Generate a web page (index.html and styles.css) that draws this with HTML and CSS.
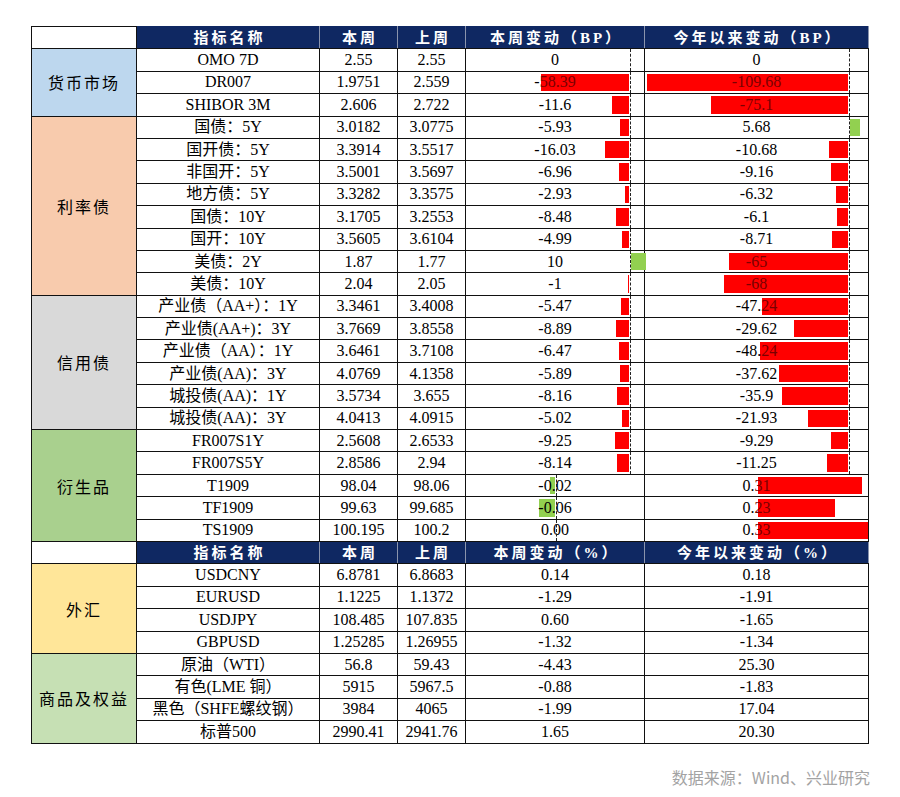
FILE: index.html
```html
<!DOCTYPE html>
<html lang="zh-CN">
<head>
<meta charset="utf-8">
<title>市场数据周报</title>
<link rel="stylesheet" href="styles.css">
</head>
<body>
<div class="page">
<table class="grid">
<colgroup>
<col class="w1"><col class="w2"><col class="w3"><col class="w4"><col class="w5"><col class="w6">
</colgroup>
<tbody>
<tr class="head"><td class="blank"></td><th>指标名称</th><th>本周</th><th>上周</th><th>本周变动（BP）</th><th>今年以来变动（BP）</th></tr>

<tr><td class="cat money" rowspan="3">货币市场</td><td>OMO 7D</td><td>2.55</td><td>2.55</td>
<td class="bc c5"><span class="axis"></span><span class="val">0</span></td>
<td class="bc c6"><span class="axis"></span><span class="val">0</span></td></tr>
<tr><td>DR007</td><td>1.9751</td><td>2.559</td>
<td class="bc c5"><span class="axis"></span><span class="bar neg" style="width:87.6px"></span><span class="val">-<em>58.39</em></span></td>
<td class="bc c6"><span class="axis"></span><span class="bar neg" style="width:200.7px"></span><span class="val"><em>-109.68</em></span></td></tr>
<tr><td>SHIBOR 3M</td><td>2.606</td><td>2.722</td>
<td class="bc c5"><span class="axis"></span><span class="bar neg" style="width:17.4px"></span><span class="val">-11.6</span></td>
<td class="bc c6"><span class="axis"></span><span class="bar neg" style="width:137.4px"></span><span class="val"><em>-75.1</em></span></td></tr>

<tr><td class="cat rate" rowspan="8">利率债</td><td>国债：5Y</td><td>3.0182</td><td>3.0775</td>
<td class="bc c5"><span class="axis"></span><span class="bar neg" style="width:8.9px"></span><span class="val">-5.93</span></td>
<td class="bc c6"><span class="axis"></span><span class="bar pos green" style="width:10.4px"></span><span class="val">5.68</span></td></tr>
<tr><td>国开债：5Y</td><td>3.3914</td><td>3.5517</td>
<td class="bc c5"><span class="axis"></span><span class="bar neg" style="width:24px"></span><span class="val">-16.03</span></td>
<td class="bc c6"><span class="axis"></span><span class="bar neg" style="width:19.5px"></span><span class="val">-10.68</span></td></tr>
<tr><td>非国开：5Y</td><td>3.5001</td><td>3.5697</td>
<td class="bc c5"><span class="axis"></span><span class="bar neg" style="width:10.4px"></span><span class="val">-6.96</span></td>
<td class="bc c6"><span class="axis"></span><span class="bar neg" style="width:16.8px"></span><span class="val">-9.16</span></td></tr>
<tr><td>地方债：5Y</td><td>3.3282</td><td>3.3575</td>
<td class="bc c5"><span class="axis"></span><span class="bar neg" style="width:4.4px"></span><span class="val">-2.93</span></td>
<td class="bc c6"><span class="axis"></span><span class="bar neg" style="width:11.6px"></span><span class="val">-6.32</span></td></tr>
<tr><td>国债：10Y</td><td>3.1705</td><td>3.2553</td>
<td class="bc c5"><span class="axis"></span><span class="bar neg" style="width:12.7px"></span><span class="val">-8.48</span></td>
<td class="bc c6"><span class="axis"></span><span class="bar neg" style="width:11.2px"></span><span class="val">-6.1</span></td></tr>
<tr><td>国开：10Y</td><td>3.5605</td><td>3.6104</td>
<td class="bc c5"><span class="axis"></span><span class="bar neg" style="width:7.5px"></span><span class="val">-4.99</span></td>
<td class="bc c6"><span class="axis"></span><span class="bar neg" style="width:15.9px"></span><span class="val">-8.71</span></td></tr>
<tr><td>美债：2Y</td><td>1.87</td><td>1.77</td>
<td class="bc c5"><span class="axis"></span><span class="bar pos green" style="width:15px"></span><span class="val">10</span></td>
<td class="bc c6"><span class="axis"></span><span class="bar neg" style="width:119px"></span><span class="val"><em>-65</em></span></td></tr>
<tr><td>美债：10Y</td><td>2.04</td><td>2.05</td>
<td class="bc c5"><span class="axis"></span><span class="bar neg" style="width:1.5px"></span><span class="val">-1</span></td>
<td class="bc c6"><span class="axis"></span><span class="bar neg" style="width:124.4px"></span><span class="val"><em>-68</em></span></td></tr>

<tr><td class="cat credit" rowspan="6">信用债</td><td>产业债（AA+）：1Y</td><td>3.3461</td><td>3.4008</td>
<td class="bc c5"><span class="axis"></span><span class="bar neg" style="width:8.2px"></span><span class="val">-5.47</span></td>
<td class="bc c6"><span class="axis"></span><span class="bar neg" style="width:86.4px"></span><span class="val">-47.<em>24</em></span></td></tr>
<tr><td>产业债(AA+)：3Y</td><td>3.7669</td><td>3.8558</td>
<td class="bc c5"><span class="axis"></span><span class="bar neg" style="width:13.3px"></span><span class="val">-8.89</span></td>
<td class="bc c6"><span class="axis"></span><span class="bar neg" style="width:54.2px"></span><span class="val">-29.62</span></td></tr>
<tr><td>产业债（AA）：1Y</td><td>3.6461</td><td>3.7108</td>
<td class="bc c5"><span class="axis"></span><span class="bar neg" style="width:9.7px"></span><span class="val">-6.47</span></td>
<td class="bc c6"><span class="axis"></span><span class="bar neg" style="width:88.3px"></span><span class="val">-48.<em>24</em></span></td></tr>
<tr><td>产业债(AA)：3Y</td><td>4.0769</td><td>4.1358</td>
<td class="bc c5"><span class="axis"></span><span class="bar neg" style="width:8.8px"></span><span class="val">-5.89</span></td>
<td class="bc c6"><span class="axis"></span><span class="bar neg" style="width:68.8px"></span><span class="val">-37.62</span></td></tr>
<tr><td>城投债(AA)：1Y</td><td>3.5734</td><td>3.655</td>
<td class="bc c5"><span class="axis"></span><span class="bar neg" style="width:12.2px"></span><span class="val">-8.16</span></td>
<td class="bc c6"><span class="axis"></span><span class="bar neg" style="width:65.7px"></span><span class="val">-35.9</span></td></tr>
<tr><td>城投债(AA)：3Y</td><td>4.0413</td><td>4.0915</td>
<td class="bc c5"><span class="axis"></span><span class="bar neg" style="width:7.5px"></span><span class="val">-5.02</span></td>
<td class="bc c6"><span class="axis"></span><span class="bar neg" style="width:40.1px"></span><span class="val">-21.93</span></td></tr>

<tr><td class="cat deriv" rowspan="5">衍生品</td><td>FR007S1Y</td><td>2.5608</td><td>2.6533</td>
<td class="bc c5"><span class="axis"></span><span class="bar neg" style="width:13.9px"></span><span class="val">-9.25</span></td>
<td class="bc c6"><span class="axis"></span><span class="bar neg" style="width:17px"></span><span class="val">-9.29</span></td></tr>
<tr><td>FR007S5Y</td><td>2.8586</td><td>2.94</td>
<td class="bc c5"><span class="axis"></span><span class="bar neg" style="width:12.2px"></span><span class="val">-8.14</span></td>
<td class="bc c6"><span class="axis"></span><span class="bar neg" style="width:20.6px"></span><span class="val">-11.25</span></td></tr>
<tr><td>T1909</td><td>98.04</td><td>98.06</td>
<td class="bc c5b"><span class="axis"></span><span class="bar neg green" style="width:5.3px"></span><span class="val">-0.02</span></td>
<td class="bc c6b"><span class="bar pos" style="width:104px"></span><span class="val">0.<em>31</em></span></td></tr>
<tr><td>TF1909</td><td>99.63</td><td>99.685</td>
<td class="bc c5b"><span class="axis"></span><span class="bar neg green" style="width:16px"></span><span class="val">-0.06</span></td>
<td class="bc c6b"><span class="bar pos" style="width:77px"></span><span class="val">0.<em>23</em></span></td></tr>
<tr><td>TS1909</td><td>100.195</td><td>100.2</td>
<td class="bc c5b"><span class="axis"></span><span class="val">0.00</span></td>
<td class="bc c6b"><span class="bar pos" style="width:110px"></span><span class="val">0.<em>33</em></span></td></tr>

<tr class="head"><td class="blank"></td><th>指标名称</th><th>本周</th><th>上周</th><th>本周变动（%）</th><th>今年以来变动（%）</th></tr>

<tr><td class="cat fx" rowspan="4">外汇</td><td>USDCNY</td><td>6.8781</td><td>6.8683</td><td>0.14</td><td>0.18</td></tr>
<tr><td>EURUSD</td><td>1.1225</td><td>1.1372</td><td>-1.29</td><td>-1.91</td></tr>
<tr><td>USDJPY</td><td>108.485</td><td>107.835</td><td>0.60</td><td>-1.65</td></tr>
<tr><td>GBPUSD</td><td>1.25285</td><td>1.26955</td><td>-1.32</td><td>-1.34</td></tr>

<tr><td class="cat comm" rowspan="4">商品及权益</td><td>原油（WTI）</td><td>56.8</td><td>59.43</td><td>-4.43</td><td>25.30</td></tr>
<tr><td>有色(LME 铜）</td><td>5915</td><td>5967.5</td><td>-0.88</td><td>-1.83</td></tr>
<tr><td>黑色（SHFE螺纹钢）</td><td>3984</td><td>4065</td><td>-1.99</td><td>17.04</td></tr>
<tr><td>标普500</td><td>2990.41</td><td>2941.76</td><td>1.65</td><td>20.30</td></tr>
</tbody>
</table>
<p class="source">数据来源：Wind、兴业研究</p>
</div>
</body>
</html>
```

FILE: styles.css
```css
html, body {
  margin: 0;
  padding: 0;
  background: #ffffff;
}

.page {
  padding: 26px 0 0 31px;
  width: 839px;
}

.grid {
  border-collapse: collapse;
  table-layout: fixed;
  width: 837px;
  font-family: "Liberation Serif", "Noto Sans CJK SC", serif;
}

.w1 { width: 105px; }
.w2 { width: 183px; }
.w3 { width: 78px; }
.w4 { width: 68px; }
.w5 { width: 179px; }
.w6 { width: 224px; }

.grid tr {
  height: 22.4px;
}

.grid td,
.grid th {
  border: 1px solid #111111;
  padding: 0;
  text-align: center;
  vertical-align: middle;
  white-space: nowrap;
  font-size: 16px;
  line-height: 20px;
  color: #000000;
  font-weight: normal;
}

.head th {
  background: #0f2862;
  color: #ffffff;
  font-family: "Liberation Serif", "Noto Sans CJK SC", serif;
  font-weight: bold;
  font-size: 15px;
  letter-spacing: 3px;
  padding-left: 3px;
  border-left-color: #8a94ad;
  border-right-color: #8a94ad;
  border-top-color: #0f2862;
}

.head .blank {
  background: #ffffff;
}

.cat {
  font-family: "Noto Sans CJK SC", sans-serif;
  font-size: 15px;
  letter-spacing: 2px;
  padding-left: 2px;
  color: #222222;
}

.money { background: #bdd7ee; }
.rate { background: #f8cbad; }
.credit { background: #d9d9d9; }
.deriv { background: #a9d08e; }
.fx { background: #ffe699; }
.comm { background: #c6e0b4; }

.bc {
  position: relative;
}

.bc .val {
  position: relative;
  z-index: 2;
}

.bc .val em {
  font-style: normal;
  color: #7a0000;
}

.bar {
  position: absolute;
  top: 2px;
  bottom: 2px;
  background: #ff0000;
  z-index: 1;
}

.bar.green {
  background: #92d050;
}

.axis {
  position: absolute;
  top: 0;
  bottom: 0;
  width: 0;
  border-left: 1px dashed #222222;
  z-index: 3;
}

.c5 .axis { left: 164px; }
.c5 .bar.neg { right: 15px; }
.c5 .bar.pos { left: 165px; }

.c6 .axis { left: 204px; }
.c6 .bar.neg { right: 20px; }
.c6 .bar.pos { left: 205px; }

.c5b .axis { left: 90px; }
.c5b .bar.neg { right: 89px; }

.c6b .bar.pos { left: 113px; }

.source {
  margin: 21px 0 0 0;
  text-align: right;
  font-family: "Noto Sans CJK SC", sans-serif;
  font-size: 16px;
  line-height: 24px;
  color: #a3a3a3;
}
```
